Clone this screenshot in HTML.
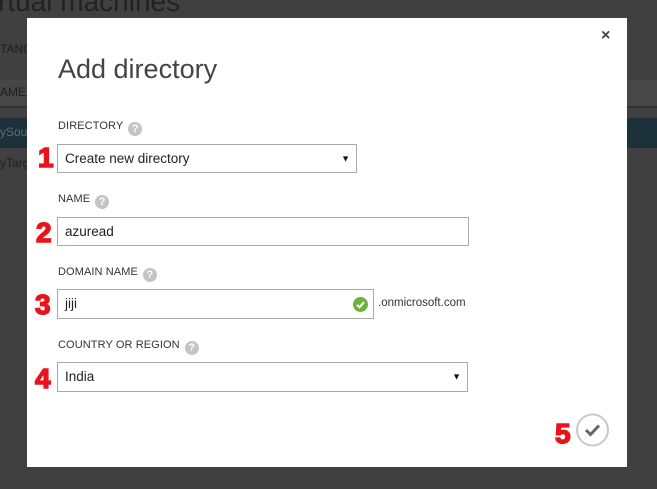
<!DOCTYPE html>
<html><head><meta charset="utf-8"><style>
*{margin:0;padding:0;box-sizing:border-box}
body{width:657px;height:489px;background:#404040;position:relative;overflow:hidden;font-family:"Segoe UI","Liberation Sans",sans-serif}
.bg{position:absolute;color:#1e1e1e}
.dlg{position:absolute;left:27px;top:18px;width:600px;height:449px;background:#fff}
.t{position:absolute;color:#222}
.lbl{position:absolute;font-size:11px;color:#333;letter-spacing:0.1px;line-height:14px}
.q{display:inline-block;width:14px;height:14px;border-radius:50%;background:#c4c4c4;color:#fff;font-size:11px;font-weight:bold;text-align:center;line-height:14px;vertical-align:-3px;margin-left:5px}
.box{position:absolute;border:1px solid #aaa;background:#fff;font-size:13.5px;color:#222;padding-left:7px}
.num{position:absolute;color:#e8141c;font-weight:bold;font-size:28px;line-height:28px;font-family:"Liberation Sans",sans-serif;-webkit-text-stroke:1.5px #e8141c}
.arr{position:absolute;right:6px;top:50%;transform:translateY(-50%);font-size:9px;line-height:9px;color:#111}
</style></head><body>
<div class="bg" style="left:-2px;top:-14px;font-size:28px;color:#222">rtual machines</div>
<div class="bg" style="left:0;top:42px;font-size:12px">TANC</div>
<div style="position:absolute;left:0;top:80px;width:657px;height:28px;background:#474747;border-bottom:2px solid #333"></div>
<div class="bg" style="left:0;top:85px;font-size:12px">AME</div>
<div style="position:absolute;left:0;top:118px;width:657px;height:30px;background:#1c313a"></div>
<div class="bg" style="left:0;top:125px;font-size:12px;color:#667">ySour</div>
<div class="bg" style="left:0;top:156px;font-size:12px">yTarg</div>

<div class="dlg"></div>
<div class="t" style="left:601px;top:27px;font-size:16px;font-weight:bold;color:#444">×</div>
<div class="t" style="left:58px;top:54px;font-size:27px;color:#444;font-weight:300">Add directory</div>

<div class="lbl" style="left:58px;top:119px">DIRECTORY<span class="q">?</span></div>
<div class="num" style="left:38px;top:144px">1</div>
<div class="box" style="left:57px;top:144px;width:300px;height:29px;line-height:27px">Create new directory<span class="arr">▼</span></div>

<div class="lbl" style="left:58px;top:192px">NAME<span class="q">?</span></div>
<div class="num" style="left:36px;top:219px">2</div>
<div class="box" style="left:57px;top:217px;width:412px;height:29px;line-height:27px">azuread</div>

<div class="lbl" style="left:58px;top:265px">DOMAIN NAME<span class="q">?</span></div>
<div class="num" style="left:35px;top:291px">3</div>
<div class="box" style="left:57px;top:289px;width:317px;height:30px;line-height:28px">jiji
<svg style="position:absolute;right:5px;top:7px" width="15" height="15" viewBox="0 0 15 15"><circle cx="7.5" cy="7.5" r="7.5" fill="#6cb33e"/><path d="M4 7.8 L6.5 10.2 L11 5.2" stroke="#fff" stroke-width="2" fill="none"/></svg></div>
<div class="t" style="left:378px;top:297px;font-size:11.5px;color:#333">.onmicrosoft.com</div>

<div class="lbl" style="left:58px;top:338px">COUNTRY OR REGION<span class="q">?</span></div>
<div class="num" style="left:35px;top:365px">4</div>
<div class="box" style="left:57px;top:362px;width:411px;height:30px;line-height:28px">India<span class="arr">▼</span></div>

<div class="num" style="left:555px;top:420px">5</div>
<svg style="position:absolute;left:575px;top:413px" width="36" height="34" viewBox="0 0 36 34"><circle cx="17.5" cy="17" r="15.5" fill="none" stroke="#c8c8c8" stroke-width="2"/><path d="M11 17 L15.5 21.5 L24 12.5" stroke="#666" stroke-width="3" fill="none"/></svg>
</body></html>
